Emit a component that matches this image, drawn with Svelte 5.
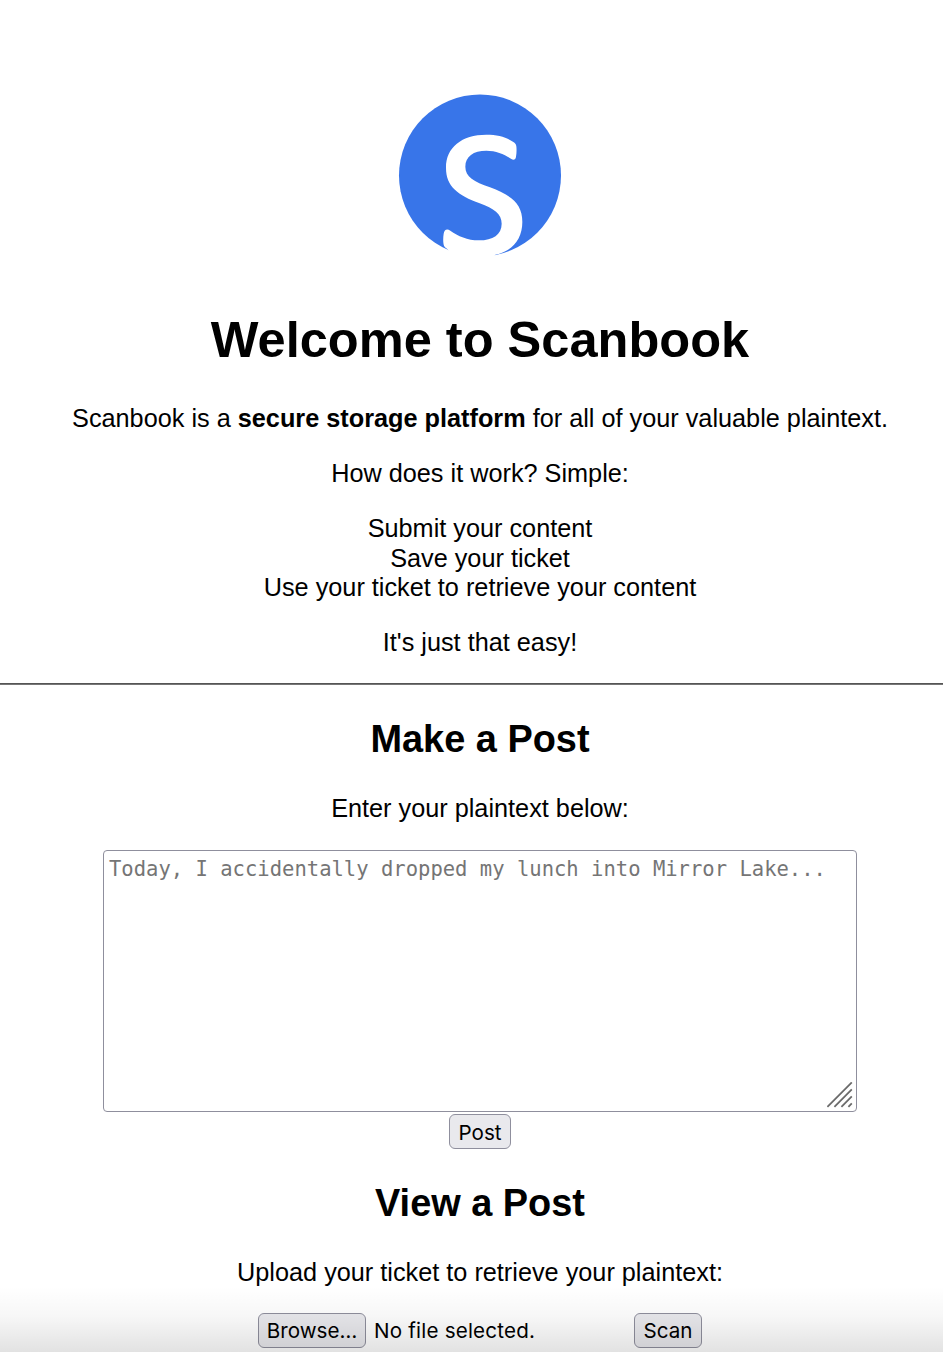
<script>
  const steps = ['Submit your content', 'Save your ticket', 'Use your ticket to retrieve your content'];
</script>

<div class="page">
  <main>
    <svg class="logo" viewBox="0 0 540 540" role="img" aria-label="Scanbook">
      <circle cx="270" cy="271.5" r="243" fill="#3875e9" />
      <path
        fill="#fff"
        d="M370 171C352 158 324 149.500 289 149.500C215 149.500 168 188 168 248C168 305 204 330 269 355C312 371 335 387 335 416C335 449 309 466 267 466C232 466 204 453 181 437C170 430 163 435 161 446C159 460 159 474 162 482Q164 487 169 490L184 505L240 530L300 530L316 509C366 499 397 464 397 411C397 354 362 331 300 307C252 290 226 275 226 245C226 214 250 197 289 197C319 197 345 209 364 222C372 227 377 222 378 215C380 205 380 192 379 184C378 177 375 174 370 171Z"
      />
    </svg>
    <h1>Welcome to Scanbook</h1>
    <p>Scanbook is a <b>secure storage platform</b> for all of your valuable plaintext.</p>
    <p>How does it work? Simple:</p>
    <ul>
      {#each steps as step}
        <li>{step}</li>
      {/each}
    </ul>
    <p>It's just that easy!</p>
    <hr />
    <h2>Make a Post</h2>
    <p>Enter your plaintext below:</p>
    <form class="post">
      <div class="field">
        <textarea placeholder="Today, I accidentally dropped my lunch into Mirror Lake..."></textarea>
        <svg class="grip" viewBox="0 0 26 26" aria-hidden="true">
          <path d="M.4 24.8L24.8 .4M7.4 24.8L24.8 7.4M14.4 24.8L24.8 14.4M21.4 24.8L24.8 21.4" />
        </svg>
      </div>
      <button type="button">Post</button>
    </form>
    <h2>View a Post</h2>
    <p>Upload your ticket to retrieve your plaintext:</p>
    <form class="upload">
      <button class="browse" type="button">Browse…</button>
      <span>No file selected.</span>
      <button class="scan" type="button">Scan</button>
    </form>
  </main>
  <div class="shade"></div>
</div>

<style>
  :global(body) {
    margin: 0;
    background: #fff;
  }
  .page {
    position: relative;
    width: 100%;
    height: 1352px;
    overflow: hidden;
  }
  main {
    width: 960px;
    padding-top: 85px;
    box-sizing: border-box;
    font: 25.28px/29.44px 'Liberation Sans', Arial, sans-serif;
    color: #000;
    text-align: center;
  }
  .logo {
    display: block;
    width: 180px;
    height: 180px;
    margin: 0 auto;
  }
  h1 {
    margin: 46.3px 0 33.3px;
    font-size: 50.56px;
    line-height: 58.9px;
  }
  h2 {
    margin: 32.4px 0;
    font-size: 37.92px;
    line-height: 44.2px;
  }
  p {
    margin: 0 0 25.6px;
  }
  ul {
    margin: 0 0 25.6px;
    padding: 0;
    list-style: none;
    line-height: 29.75px;
  }
  li:first-child {
    padding-bottom: 0.45px;
  }
  li:last-child {
    margin-top: -0.45px;
  }
  hr {
    height: 2px;
    margin: -0.5px 0 0;
    border: 0;
    background: linear-gradient(#555 50%, #777 50%);
  }
  .post {
    display: flex;
    flex-direction: column;
    align-items: center;
    gap: 2px;
    padding-top: 1px;
  }
  .field {
    position: relative;
    width: 754px;
    height: 262px;
  }
  textarea {
    display: block;
    box-sizing: border-box;
    width: 100%;
    height: 100%;
    margin: 0;
    padding: 5px;
    border: 1px solid #8f8f9d;
    border-radius: 4px;
    outline: 0;
    background: #fff;
    resize: none;
    overflow: hidden;
    font: 20.54px/26px 'DejaVu Sans Mono', monospace;
    white-space: pre;
  }
  textarea::placeholder {
    color: #757575;
    opacity: 1;
  }
  .grip {
    position: absolute;
    right: 4px;
    bottom: 4px;
    width: 26px;
    height: 26px;
    fill: none;
    stroke: #6b6b6b;
    stroke-width: 1.8;
  }
  button {
    box-sizing: border-box;
    width: 62px;
    height: 35px;
    margin: 0;
    padding: 2px 0 0;
    border: 1px solid #8f8f9d;
    border-radius: 6px;
    background: #e9e9ed;
    color: #000;
    font: 20.6px/31px Inter, sans-serif;
    white-space: nowrap;
  }
  .upload {
    display: flex;
    width: 444px;
    margin: 0 auto;
    font: 20.6px/35px Inter, sans-serif;
    text-align: left;
  }
  .upload button {
    padding: 0;
  }
  .upload .browse {
    width: 108px;
  }
  .upload span {
    margin-left: 8px;
    letter-spacing: 0.2px;
    white-space: nowrap;
  }
  .upload .scan {
    width: 68px;
    margin-left: auto;
  }
  .shade {
    position: absolute;
    inset: auto 0 0;
    height: 66px;
    background: linear-gradient(rgba(0, 0, 0, 0), rgba(0, 0, 0, 0.03) 45%, rgba(0, 0, 0, 0.115));
    pointer-events: none;
  }
</style>
